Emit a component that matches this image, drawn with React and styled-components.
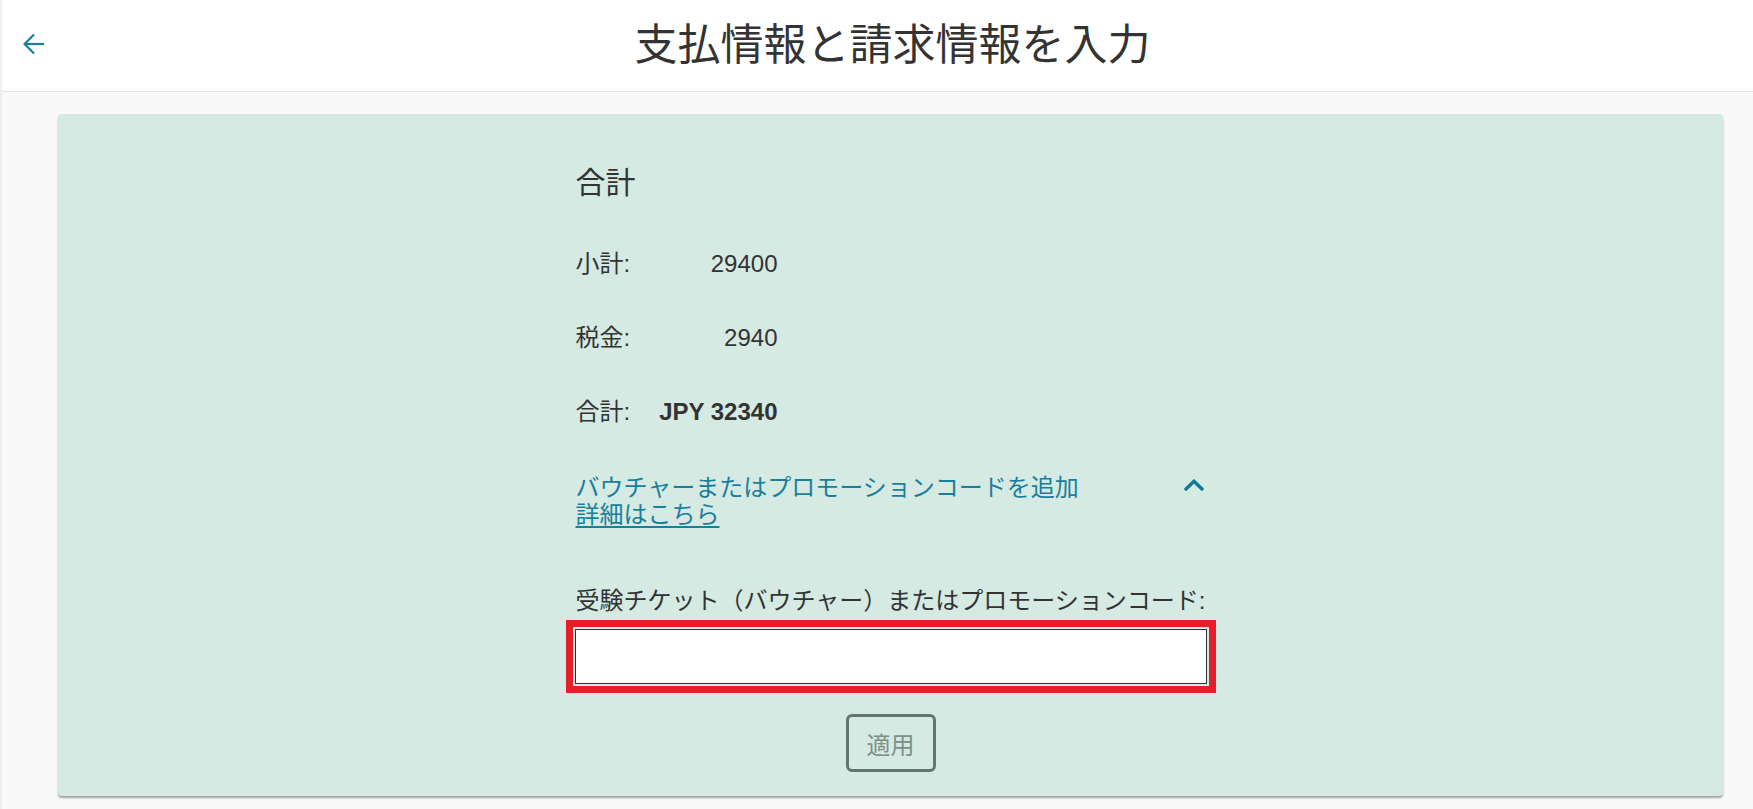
import React from "react";
import styled, { createGlobalStyle } from "styled-components";

const GlobalStyle = createGlobalStyle`
	html, body {
		margin: 0;
		padding: 0;
		background: #f9f9f9;
	}
	body {
		font-family: "Liberation Sans", "Noto Sans CJK JP", sans-serif;
		color: #333;
	}
`;

const teal = "#1a7f9c";

const Page = styled.div`
	min-height: 809px;
	border-left: 2px solid #eeeeee;
	box-sizing: border-box;
`;

const Header = styled.header`
	display: grid;
	grid-template-columns: 60px 1fr 30px;
	align-items: center;
	height: 91px;
	background: #fff;
	border-bottom: 1px solid #e2e2e2;
`;

const BackButton = styled.button`
	display: flex;
	align-items: center;
	justify-content: center;
	width: 24px;
	height: 24px;
	margin-left: 20px;
	margin-top: -4px;
	padding: 0;
	border: none;
	background: none;
	color: ${teal};
	cursor: pointer;
`;

const Title = styled.h1`
	margin: 0;
	text-align: center;
	font-size: 43px;
	font-weight: 400;
	line-height: 1;
	color: #333;
`;

const Card = styled.section`
	margin: 22px 30px 0 56px;
	padding: 51px 0 24px;
	background: #d5eae3;
	border-radius: 4px;
	box-shadow: 0 2px 2px rgba(0, 0, 0, 0.35);
`;

const Column = styled.div`
	width: 630px;
	margin: 0 auto;
	display: flex;
	flex-direction: column;
`;

const Heading = styled.h2`
	margin: 0;
	font-size: 30px;
	font-weight: 400;
	line-height: 36px;
`;

const Totals = styled.dl`
	display: grid;
	grid-template-columns: 80px 122px;
	row-gap: 46px;
	margin: 49px 0 0;
	font-size: 24px;
	line-height: 28px;
`;

const Label = styled.dt`
	margin: 0;
`;

const Value = styled.dd`
	margin: 0;
	text-align: right;
	font-weight: ${p => (p.$bold ? 700 : 400)};
`;

const VoucherToggle = styled.div`
	display: flex;
	justify-content: space-between;
	align-items: flex-start;
	margin-top: 48px;
	font-size: 24px;
	line-height: 27px;
	color: ${teal};
`;

const ToggleText = styled.div`
	display: flex;
	flex-direction: column;
	align-items: flex-start;
`;

const MoreLink = styled.a`
	color: ${teal};
	text-decoration: underline;
	text-underline-offset: 3px;
	text-decoration-thickness: 2px;
`;

const Chevron = styled.button`
	display: flex;
	padding: 0;
	margin: 5px 2px 0 0;
	border: none;
	background: none;
	color: #127893;
`;

const FieldLabel = styled.label`
	margin-top: 59px;
	font-size: 24px;
	line-height: 28px;
	white-space: nowrap;
`;

const Highlight = styled.div`
	margin: 5px -10px 0;
	padding: 2px;
	border: 7px solid #e61e2a;
`;

const Input = styled.input`
	display: block;
	width: 100%;
	height: 55px;
	box-sizing: border-box;
	border: 1px solid #2e3436;
	background: #fff;
	font-size: 24px;
	padding: 0 10px;
	outline: none;
`;

const ApplyButton = styled.button`
	align-self: center;
	margin-top: 21px;
	width: 90px;
	height: 58px;
	border: 3px solid #62766f;
	border-radius: 6px;
	background: transparent;
	color: #7e8f8a;
	font-family: inherit;
	font-size: 24px;
	cursor: default;
`;

const rows = [
	{ label: "小計:", value: "29400" },
	{ label: "税金:", value: "2940" },
	{ label: "合計:", value: "JPY 32340", bold: true },
];

export default function App() {
	return (
		<Page>
			<GlobalStyle />
			<Header>
				<BackButton aria-label="戻る">
					<svg width="22" height="22" viewBox="0 0 22 22" fill="none" stroke="currentColor" strokeWidth="2.2">
						<path d="M21 11H2.5" />
						<path d="M11 1.5L1.6 11l9.4 9.5" />
					</svg>
				</BackButton>
				<Title>支払情報と請求情報を入力</Title>
				<div />
			</Header>
			<Card>
				<Column>
					<Heading>合計</Heading>
					<Totals>
						{rows.map(r => (
							<React.Fragment key={r.label}>
								<Label>{r.label}</Label>
								<Value $bold={r.bold}>{r.value}</Value>
							</React.Fragment>
						))}
					</Totals>
					<VoucherToggle>
						<ToggleText>
							<span>バウチャーまたはプロモーションコードを追加</span>
							<MoreLink href="#">詳細はこちら</MoreLink>
						</ToggleText>
						<Chevron aria-label="閉じる">
							<svg width="20" height="12" viewBox="0 0 20 12" fill="none" stroke="currentColor" strokeWidth="3.4" strokeLinecap="round">
								<path d="M2 10L10 2.3L18 10" />
							</svg>
						</Chevron>
					</VoucherToggle>
					<FieldLabel htmlFor="voucher">受験チケット（バウチャー）またはプロモーションコード:</FieldLabel>
					<Highlight>
						<Input id="voucher" type="text" />
					</Highlight>
					<ApplyButton>適用</ApplyButton>
				</Column>
			</Card>
		</Page>
	);
}
